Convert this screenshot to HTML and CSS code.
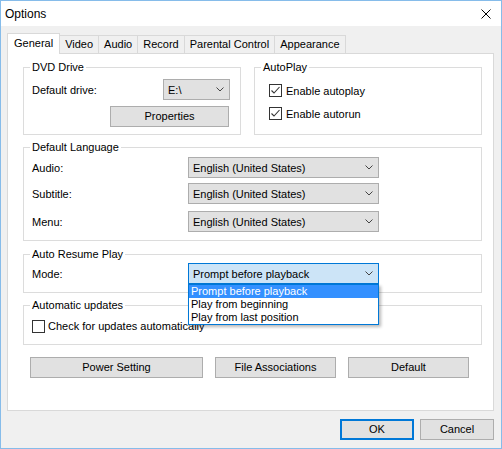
FILE: index.html
```html
<!DOCTYPE html>
<html>
<head>
<meta charset="utf-8">
<title>Options</title>
<link rel="stylesheet" href="styles.css">
</head>
<body>
<div class="window">
  <div class="titlebar">
    <span class="title">Options</span>
    <svg class="close" width="10" height="10" viewBox="0 0 10 10"><path d="M0.5 0.5 L9.5 9.5 M9.5 0.5 L0.5 9.5" stroke="#000" stroke-width="1" fill="none"/></svg>
  </div>
  <div class="main">
    <div class="tabs">
      <div class="tab tab--active">General</div>
      <div class="tab">Video</div>
      <div class="tab">Audio</div>
      <div class="tab">Record</div>
      <div class="tab">Parental Control</div>
      <div class="tab">Appearance</div>
    </div>
    <div class="panel">
      <div class="row-top">
        <div class="frame frame--dvd">
          <span class="caption">DVD Drive</span>
          <div class="field-row">
            <span>Default drive:</span>
            <div class="combo combo--drive"><span>E:\</span><svg width="8" height="5" viewBox="0 0 8 5"><path d="M0.5 0.5 L4 4 L7.5 0.5" stroke="#444" fill="none"/></svg></div>
          </div>
          <div class="btn btn--props">Properties</div>
        </div>
        <div class="frame frame--autoplay">
          <span class="caption">AutoPlay</span>
          <div class="check-row"><span class="checkbox"><svg width="11" height="11" viewBox="0 0 11 11"><path d="M1.5 5.5 L4 8 L9.5 2" stroke="#333" stroke-width="1.1" fill="none"/></svg></span><span>Enable autoplay</span></div>
          <div class="check-row"><span class="checkbox"><svg width="11" height="11" viewBox="0 0 11 11"><path d="M1.5 5.5 L4 8 L9.5 2" stroke="#333" stroke-width="1.1" fill="none"/></svg></span><span>Enable autorun</span></div>
        </div>
      </div>

      <div class="frame frame--lang">
        <span class="caption">Default Language</span>
        <div class="lang-row">
          <span class="lang-label">Audio:</span>
          <div class="combo combo--lang"><span>English (United States)</span><svg width="8" height="5" viewBox="0 0 8 5"><path d="M0.5 0.5 L4 4 L7.5 0.5" stroke="#444" fill="none"/></svg></div>
        </div>
        <div class="lang-row">
          <span class="lang-label">Subtitle:</span>
          <div class="combo combo--lang"><span>English (United States)</span><svg width="8" height="5" viewBox="0 0 8 5"><path d="M0.5 0.5 L4 4 L7.5 0.5" stroke="#444" fill="none"/></svg></div>
        </div>
        <div class="lang-row lang-row--last">
          <span class="lang-label">Menu:</span>
          <div class="combo combo--lang"><span>English (United States)</span><svg width="8" height="5" viewBox="0 0 8 5"><path d="M0.5 0.5 L4 4 L7.5 0.5" stroke="#444" fill="none"/></svg></div>
        </div>
      </div>

      <div class="frame frame--resume">
        <span class="caption">Auto Resume Play</span>
        <div class="lang-row">
          <span class="lang-label">Mode:</span>
          <div class="combo-wrap">
            <div class="combo combo--lang combo--focus"><span>Prompt before playback</span><svg width="8" height="5" viewBox="0 0 8 5"><path d="M0.5 0.5 L4 4 L7.5 0.5" stroke="#444" fill="none"/></svg></div>
            <ul class="dropdown">
              <li class="dropdown-item dropdown-item--selected">Prompt before playback</li>
              <li class="dropdown-item">Play from beginning</li>
              <li class="dropdown-item">Play from last position</li>
            </ul>
          </div>
        </div>
      </div>

      <div class="frame frame--updates">
        <span class="caption">Automatic updates</span>
        <div class="check-row check-row--updates"><span class="checkbox"></span><span>Check for updates automatically</span></div>
      </div>

      <div class="button-row">
        <div class="btn btn--power">Power Setting</div>
        <div class="btn btn--mid">File Associations</div>
        <div class="btn btn--mid">Default</div>
      </div>
    </div>
    <div class="footer">
      <div class="btn btn--dialog btn--default">OK</div>
      <div class="btn btn--dialog">Cancel</div>
    </div>
  </div>
</div>
</body>
</html>
```

FILE: styles.css
```css
* { box-sizing: border-box; }

body {
  margin: 0;
  font-family: "Liberation Sans", Arial, sans-serif;
  font-size: 11px;
  color: #000;
  background: #fff;
}

.window {
  width: 502px;
  height: 449px;
  border: 1px solid #86bcea;
  background: #f0f0f0;
  display: flex;
  flex-direction: column;
}

.titlebar {
  height: 25px;
  background: #fff;
  display: flex;
  align-items: center;
  justify-content: space-between;
  padding: 0 10px 0 4px;
  font-size: 12px;
}

.close { display: block; }

.main {
  padding: 7px 7px 0 6px;
}

.tabs {
  display: flex;
  align-items: flex-end;
  height: 20px;
}

.tab {
  height: 18px;
  border: 1px solid #d9d9d9;
  border-bottom: 0;
  margin-left: -1px;
  padding: 0 5px;
  line-height: 16px;
  background: #f0f0f0;
  white-space: nowrap;
}

.tab--active {
  height: 21px;
  margin-left: 0;
  margin-bottom: -1px;
  padding: 0 6px;
  line-height: 19px;
  background: #fff;
  position: relative;
  z-index: 1;
}

.panel {
  height: 358px;
  border: 1px solid #d9d9d9;
  background: #fff;
  padding: 13px 11px 0 15px;
}

.row-top {
  display: flex;
  gap: 13px;
}

.frame {
  position: relative;
  border: 1px solid #dcdcdc;
}

.caption {
  position: absolute;
  top: -7px;
  left: 6px;
  padding: 0 2px;
  line-height: 13px;
  background: #fff;
  white-space: nowrap;
}

.frame--dvd {
  width: 218px;
  height: 68px;
  padding: 11px 10px 0 8px;
}

.frame--autoplay {
  flex: 1;
  height: 68px;
  padding: 11px 0 0 14px;
}

.field-row {
  display: flex;
  align-items: center;
  justify-content: space-between;
}

.combo {
  display: flex;
  align-items: center;
  justify-content: space-between;
  height: 21px;
  border: 1px solid #adadad;
  background: #e1e1e1;
  padding: 0 5px 0 4px;
  white-space: nowrap;
}

.combo svg { display: block; flex: none; }

.combo--drive { width: 67px; }

.combo--lang { width: 191px; }

.combo--focus {
  border-color: #0078d7;
  background: #cce4f7;
}

.btn {
  height: 21px;
  border: 1px solid #adadad;
  background: #e1e1e1;
  text-align: center;
  line-height: 19px;
  white-space: nowrap;
}

.btn--props {
  width: 119px;
  margin: 6px 1px 0 auto;
}

.check-row {
  display: flex;
  align-items: center;
  gap: 4px;
  height: 23px;
}

.checkbox {
  width: 13px;
  height: 13px;
  border: 1px solid #333;
  background: #fff;
  display: flex;
  align-items: center;
  justify-content: center;
  flex: none;
}

.checkbox svg { display: block; }

.frame--lang {
  margin-top: 12px;
  height: 94px;
  padding: 9px 0 0 8px;
}

.lang-row {
  display: flex;
  align-items: center;
  height: 21px;
}

.lang-row + .lang-row { margin-top: 5px; }
.lang-row + .lang-row--last { margin-top: 7px; }

.lang-label {
  width: 156px;
  flex: none;
}

.frame--resume {
  margin-top: 13px;
  height: 39px;
  padding: 8px 0 0 8px;
  z-index: 2;
}

.combo-wrap {
  position: relative;
}

.dropdown {
  position: absolute;
  top: 21px;
  left: 0;
  width: 191px;
  margin: 0;
  padding: 0;
  list-style: none;
  background: #fff;
  border: 1px solid #0078d7;
  box-shadow: 2px 2px 3px rgba(0, 0, 0, 0.28);
}

.dropdown-item {
  height: 13px;
  line-height: 13px;
  padding-left: 2px;
  white-space: nowrap;
}

.dropdown-item--selected {
  background: #3390ff;
  color: #fff;
}

.frame--updates {
  margin-top: 12px;
  height: 40px;
  padding: 9px 0 0 8px;
}

.check-row--updates {
  gap: 3px;
  height: 22px;
}

.button-row {
  display: flex;
  gap: 12px;
  margin-top: 12px;
  padding-left: 7px;
}

.btn--power { width: 173px; }
.btn--mid { width: 121px; }

.footer {
  display: flex;
  justify-content: flex-end;
  gap: 6px;
  padding-top: 8px;
}

.btn--dialog { width: 74px; }

.btn--default {
  border: 2px solid #0078d7;
  line-height: 17px;
}
```
